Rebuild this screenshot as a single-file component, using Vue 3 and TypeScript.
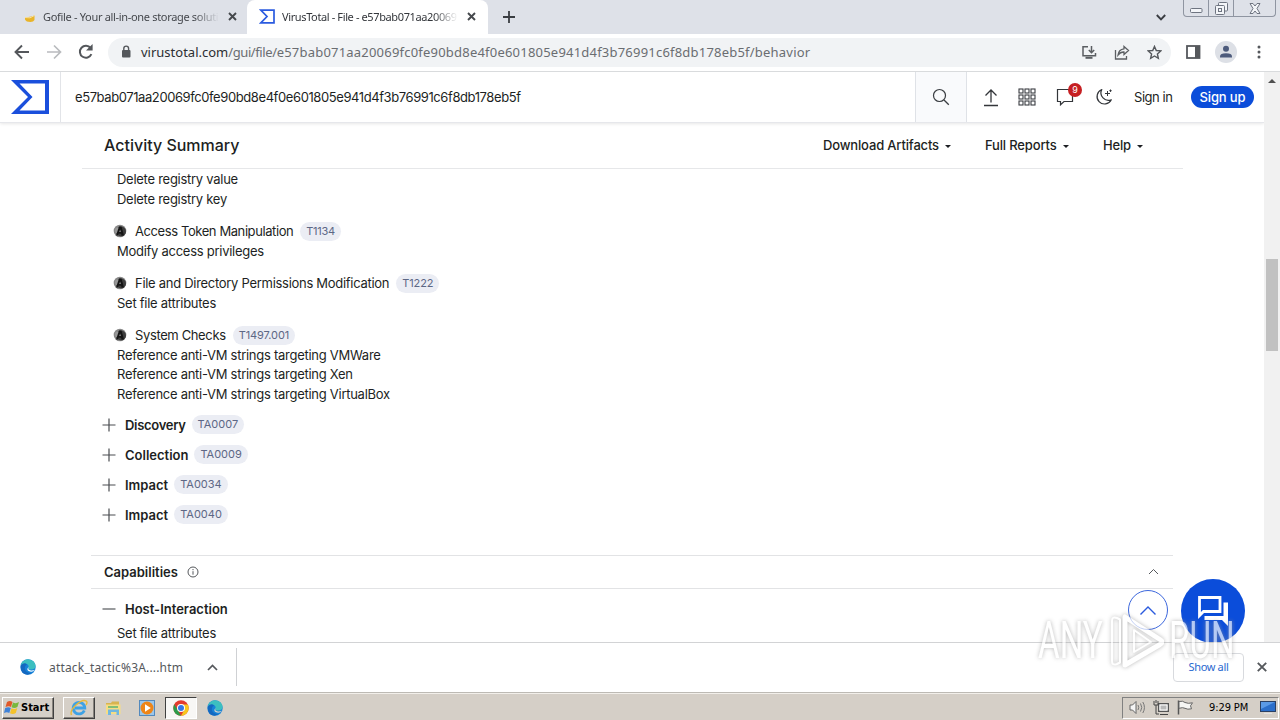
<script setup lang="ts">
interface Technique {
  name: string
  id: string
  kind: string
  items: string[]
}

interface Tactic {
  name: string
  id: string
}

const hash = 'e57bab071aa20069fc0fe90bd8e4f0e601805e941d4f3b76991c6f8db178eb5f'
const leading: string[] = ['Delete registry value', 'Delete registry key']

const techniques: Technique[] = [
  { name: 'Access Token Manipulation', id: 'T1134', kind: 'token', items: ['Modify access privileges'] },
  { name: 'File and Directory Permissions Modification', id: 'T1222', kind: 'perms', items: ['Set file attributes'] },
  {
    name: 'System Checks',
    id: 'T1497.001',
    kind: 'checks',
    items: [
      'Reference anti-VM strings targeting VMWare',
      'Reference anti-VM strings targeting Xen',
      'Reference anti-VM strings targeting VirtualBox',
    ],
  },
]

const tactics: Tactic[] = [
  { name: 'Discovery', id: 'TA0007' },
  { name: 'Collection', id: 'TA0009' },
  { name: 'Impact', id: 'TA0034' },
  { name: 'Impact', id: 'TA0040' },
]

const gridCells = [0, 1, 2, 3, 4, 5, 6, 7, 8].map((i) => ({ x: 1 + (i % 3) * 6, y: 1 + Math.floor(i / 3) * 6 }))
</script>

<template>
  <div class="screen">
    <header class="tabstrip">
      <div class="tab tab-idle">
        <svg class="fav-gofile" width="12" height="9" viewBox="0 0 12 9"><path d="M1 3.500l5-.8 4.500-1.200v4.500q-1 2-4 2-4.500 0-5.500-2.500z" fill="#e9b429" /><path d="M1 3.500l5 .3 4.500-2.300" fill="none" stroke="#f6e0a0" /></svg>
        <span class="tab-title">Gofile - Your all-in-one storage soluti</span>
        <svg class="tab-x" width="9" height="9" viewBox="0 0 9 9"><path d="M1 1l7 7M8 1l-7 7" stroke="#45484c" stroke-width="1.9" /></svg>
      </div>
      <div class="tab tab-active">
        <svg class="fav-vt" width="16" height="15" viewBox="0 0 16 15"><path d="M1.800 1.200H15v12.600H1.800L8 7.500z" fill="none" stroke="#2b5be0" stroke-width="1.700" /></svg>
        <span class="tab-title tab-title-vt">VirusTotal - File - e57bab071aa20069</span>
        <svg class="tab-x" width="9" height="9" viewBox="0 0 9 9"><path d="M1 1l7 7M8 1l-7 7" stroke="#45484c" stroke-width="1.9" /></svg>
      </div>
      <svg class="newtab" width="12" height="12" viewBox="0 0 12 12"><path d="M6 0v12M0 6h12" stroke="#3a3d42" stroke-width="1.800" /></svg>
      <svg class="tabsearch" width="10" height="7" viewBox="0 0 10 7"><path d="M.8 1l4.200 4.300L9.200 1" fill="none" stroke="#3a3d42" stroke-width="1.900" /></svg>
      <div class="winctl">
        <span class="wc wc-a"><svg width="13" height="5" viewBox="0 0 13 5"><rect x=".5" y=".5" width="11.500" height="4" rx="1" fill="#f3f5f8" stroke="#6e7480" /></svg></span>
        <span class="wc wc-b"><svg width="13" height="13" viewBox="0 0 13 13"><g fill="#f3f5f8" stroke="#6e7480"><rect x="3.500" y=".5" width="9" height="8.500" rx="1" /><rect x=".5" y="3.500" width="9" height="9" rx="1" /><rect x="3.500" y="6.500" width="3" height="3" /></g></svg></span>
        <span class="wc wc-c"><svg width="12" height="11" viewBox="0 0 12 11"><path d="M1 .5h3l2 2.500 2-2.500h3L8 5.500l3 5H8l-2-2.500-2 2.500H1l3-5z" fill="#f3f5f8" stroke="#6e7480" /></svg></span>
      </div>
    </header>

    <div class="toolbar">
      <svg class="nav" width="16" height="16" viewBox="0 0 16 16"><path d="M15 8H2M8 1.500L1.500 8 8 14.500" fill="none" stroke="#54575b" stroke-width="1.900" /></svg>
      <svg class="nav" width="16" height="16" viewBox="0 0 16 16"><path d="M1 8h13M8 1.500L14.500 8 8 14.500" fill="none" stroke="#b9bbbe" stroke-width="1.700" /></svg>
      <svg class="nav" width="16" height="16" viewBox="0 0 16 16"><path d="M13.400 10.200A6 6 0 1 1 12.600 4" fill="none" stroke="#54575b" stroke-width="2" /><path d="M14.600 0v6.600H8z" fill="#54575b" /></svg>
      <div class="omnibox">
        <svg class="lock" width="10" height="13" viewBox="0 0 10 13"><rect x="1" y="5" width="8.500" height="7.500" rx="1" fill="#55585c" /><path d="M2.800 5.500V3.500a2.400 2.400 0 0 1 4.800 0v2" fill="none" stroke="#55585c" stroke-width="1.400" /></svg>
        <span class="url"><b>virustotal.com</b><span class="urlpath">/gui/file/</span><span class="urlhash">{{ hash }}/behavior</span></span>
        <svg class="omni-i install" width="16" height="15" viewBox="0 0 16 15"><g fill="none" stroke="#5b5e62" stroke-width="1.500"><path d="M7 1.800H2v9h12.500V8M10.500 1v6.500M7.800 5l2.700 2.700L13.200 5" /><path d="M4.500 12.800h7" stroke-width="2" /></g></svg>
        <svg class="omni-i share" width="16" height="15" viewBox="0 0 16 15"><g fill="none" stroke="#5b5e62" stroke-width="1.300"><path d="M1.500 5v9h11v-3" /><path d="M10 1.500l4.500 4-4.500 4V7q-3.500-.2-6 3 .6-5.500 6-6.200z" /></g></svg>
        <svg class="omni-i star" width="15" height="15" viewBox="0 0 16 16"><path d="M8 1.500l1.900 4.400 4.800.4-3.600 3.200 1 4.700L8 11.700l-4.100 2.500 1-4.700L1.300 6.300l4.800-.4z" fill="none" stroke="#55585c" stroke-width="1.500" /></svg>
      </div>
      <svg class="panel" width="15" height="14" viewBox="0 0 15 14"><rect x="1" y="1" width="12.500" height="12" fill="#fff" stroke="#55585c" stroke-width="1.800" /><path d="M9 1h5v12H9z" fill="#55585c" /></svg>
      <svg class="avatar" width="22" height="22" viewBox="0 0 22 22"><circle cx="11" cy="11" r="11" fill="#dde0e6" /><circle cx="11" cy="7.800" r="3" fill="#4d5b7c" /><path d="M5 16.500v-1q0-3.200 6-3.200t6 3.200v1z" fill="#4d5b7c" /></svg>
      <svg class="dots" width="4" height="14" viewBox="0 0 4 14"><g fill="#55585c"><circle cx="2" cy="2" r="1.500" /><circle cx="2" cy="7" r="1.500" /><circle cx="2" cy="12" r="1.500" /></g></svg>
    </div>

    <div class="viewport">
      <main class="page">
        <div class="vt-bar">
          <div class="vt-logo"><svg width="38" height="34" viewBox="0 0 38 34"><path fill-rule="evenodd" d="M0 0h38v34H0l17-17zM8.500 3.600L21.500 17 8.500 30.400H34V3.600z" fill="#1a4fdc" /></svg></div>
          <div class="vt-query">{{ hash }}</div>
          <div class="vt-search"><svg width="18" height="18" viewBox="0 0 18 18"><circle cx="7.500" cy="7.500" r="6" fill="none" stroke="#3a3d42" stroke-width="1.200" /><path d="M12 12l4.800 4.800" stroke="#3a3d42" stroke-width="1.300" /></svg></div>
          <svg class="up" width="16" height="19" viewBox="0 0 16 19"><path d="M1 17.500h14M8 14.500V2M2.500 7.500L8 2l5.500 5.500" fill="none" stroke="#33363a" stroke-width="1.300" /></svg>
          <svg class="grid" width="18" height="18" viewBox="0 0 18 18"><rect v-for="(c, i) in gridCells" :key="i" :x="c.x" :y="c.y" width="4" height="4" fill="none" stroke="#3a3d42" stroke-width="1.100" /></svg>
          <div class="bell">
            <svg width="18" height="18" viewBox="0 0 18 18"><path d="M1.500 1.500h15v12H8L4.500 16.800v-3.300h-3z" fill="none" stroke="#33363a" stroke-width="1.200" /></svg>
            <span class="badge">9</span>
          </div>
          <svg class="moon" width="18" height="18" viewBox="0 0 18 18"><path d="M6.800 1.500a7.500 7.500 0 1 0 9.500 10.300 7.500 7.500 0 0 1-9.500-10.300z" fill="none" stroke="#33363a" stroke-width="1.200" stroke-linejoin="round" /><path d="M12.500 3v5M10 5.500h5M15.500 1.500v2.400M14.300 2.700h2.400" stroke="#33363a" stroke-width="1" /></svg>
          <span class="signin">Sign in</span>
          <span class="signup">Sign up</span>
        </div>

        <div class="summary">
          <h1>Activity Summary</h1>
          <span class="menu m1">Download Artifacts</span><i class="caret"></i>
          <span class="menu m2">Full Reports</span><i class="caret"></i>
          <span class="menu m3">Help</span><i class="caret"></i>
        </div>

        <section class="mitre">
          <p v-for="l in leading" :key="l" class="line">{{ l }}</p>
          <div v-for="t in techniques" :key="t.id" class="tech" :class="t.kind">
            <div class="tech-head">
              <svg width="14" height="14" viewBox="0 0 14 14"><circle cx="7" cy="7" r="6.300" fill="#888" /><circle cx="8" cy="7.500" r="5" fill="#3d3d3d" /><circle cx="5" cy="6.500" r="3" fill="#999" /><path d="M6 2.500h2.500l2.500 9H8.500l-.4-1.800H5.600L5 11.500H3z" fill="#151515" /><path d="M6.400 8l.7-2.500.6 2.500z" fill="#bbb" /></svg>
              <span class="tech-name">{{ t.name }}</span>
              <span class="pill">{{ t.id }}</span>
            </div>
            <p v-for="s in t.items" :key="s" class="line">{{ s }}</p>
          </div>
          <div class="tactics">
            <div v-for="t in tactics" :key="t.id" class="tactic">
              <svg width="14" height="14" viewBox="0 0 14 14"><path d="M7 .5v13M.5 7h13" stroke="#4a4d51" stroke-width="1.200" /></svg>
              <b :class="t.name.toLowerCase()">{{ t.name }}</b>
              <span class="pill pill-ta">{{ t.id }}</span>
            </div>
          </div>
        </section>

        <section class="caps">
          <div class="caps-head">
            <b>Capabilities</b>
            <svg width="12" height="12" viewBox="0 0 12 12"><circle cx="6" cy="6" r="5" fill="none" stroke="#55585c" /><path d="M6 5.200v3.500M6 3v1.200" stroke="#55585c" /></svg>
            <svg class="caps-up" width="11" height="7" viewBox="0 0 11 7"><path d="M1 6l4.500-4.500L10 6" fill="none" stroke="#55585c" /></svg>
          </div>
          <div class="tactic host">
            <svg width="14" height="14" viewBox="0 0 14 14"><path d="M.5 7h13" stroke="#55585c" stroke-width="1.200" /></svg>
            <b>Host-Interaction</b>
          </div>
          <p class="line">Set file attributes</p>
        </section>
        <div class="totop"><svg width="18" height="11" viewBox="0 0 18 11"><path d="M1.500 9.500L9 2l7.500 7.500" fill="none" stroke="#2a5ade" stroke-width="1.400" /></svg></div>
        <div class="chat"><svg width="30" height="30" viewBox="0 0 30 30"><path d="M1.500 1.500h20.500v14H5.500l-4 4z" fill="none" stroke="#fff" stroke-width="2.800" /><path d="M25.500 6.500H30V30l-6-6H6.500v-4H25.500z" fill="#fff" /></svg></div>
      </main>
      <div class="scrollbar">
        <i class="sb-arrow"></i>
        <i class="sb-thumb"></i>
      </div>
    </div>

    <div class="downloads">
      <svg class="dl-edge" width="16" height="16" viewBox="0 0 16 16"><circle cx="8" cy="8" r="7.700" fill="#1682d8" /><path d="M1 5Q4 0 9 .4q6 .8 6.500 6 .2 4-4.500 4-3 0-2.500-2 .5-3-2.500-3.600Q3 4.500 1 7z" fill="#3cbfc0" /><path d="M1 6q3-3 6-.8-3 2-2 5.200 1.500 4 7 3.400-4 3.200-8.500.8Q.2 12 1 6z" fill="#1468c0" /><path d="M8.500 8q-1 3 2.500 3.500 2 .2 4-.8-2.500 3-6 1.600-3-1.500-.5-4.300z" fill="#fff" /></svg>
      <span class="dl-name">attack_tactic%3A....htm</span>
      <svg class="dl-caret" width="11" height="7" viewBox="0 0 11 7"><path d="M1 6l4.500-4.500L10 6" fill="none" stroke="#55585c" stroke-width="1.700" /></svg>
      <i class="dl-sep"></i>
      <span class="showall">Show all</span>
      <svg class="dl-x" width="10" height="10" viewBox="0 0 10 10"><path d="M.8.8l8.400 8.400M9.200.8L.8 9.200" stroke="#55585c" stroke-width="1.900" /></svg>
    </div>

    <footer class="taskbar">
      <div class="start">
        <svg width="16" height="15" viewBox="0 0 16 15"><path d="M3 2q3-2 5.500 0L7 7Q5 5.500 1.500 7z" fill="#e0592a" /><path d="M9 2.500q3 1.500 6-.5l-1.600 5q-3 2-5.800.3z" fill="#79b83e" /><path d="M1.200 8Q4.500 6.500 6.800 8l-1.500 5Q3 11.500 0 13z" fill="#3f82d8" /><path d="M7.500 8.300q3 1.700 5.800-.2l-1.500 5q-3 1.900-5.800.2z" fill="#f4c22b" /></svg>
        <span>Start</span>
      </div>
      <div class="tb tb-up">
        <svg width="18" height="18" viewBox="0 0 18 18"><path d="M14.300 11.500A5.800 5.800 0 1 1 14.800 9H5" fill="none" stroke="#3ea2e5" stroke-width="2.800" /><path d="M1.500 16Q-.5 12 6 6t10-4q2 1 0 4" fill="none" stroke="#e7b93c" stroke-width="1.400" /></svg>
      </div>
      <div class="tb tb-flat">
        <svg width="17" height="16" viewBox="0 0 17 16"><path d="M1 3h5l1-1.500h7V5H1z" fill="#d8b450" /><path d="M1 4.500h14.500V14H1z" fill="#f6dd84" /><path d="M3 6h10v2H3z" fill="#82be77" /><path d="M3 9.500h11V15h-2.500v-3H6v3H3z" fill="#71b7df" /></svg>
      </div>
      <div class="tb tb-flat">
        <svg width="16" height="16" viewBox="0 0 16 16"><rect x=".5" y=".5" width="15" height="15" fill="#9cc7eb" stroke="#5389bd" /><circle cx="8" cy="8" r="6.500" fill="#ee8518" /><path d="M6 4.300L11.800 8 6 11.700z" fill="#fff" /></svg>
      </div>
      <div class="tb tb-on">
        <svg width="16" height="16" viewBox="0 0 16 16"><circle cx="8" cy="8" r="7.700" fill="#e33b2e" /><path d="M1.300 4.200L5 10.500l3 5.200A7.700 7.700 0 0 1 1.300 4.200z" fill="#2c9c4a" /><path d="M8 4.500h6.900A7.700 7.700 0 0 1 8 15.700L11.300 10z" fill="#f7c71e" /><circle cx="8" cy="8" r="4" fill="#fff" /><circle cx="8" cy="8" r="3" fill="#3477e5" /></svg>
      </div>
      <div class="tb tb-flat">
        <svg width="16" height="16" viewBox="0 0 16 16"><circle cx="8" cy="8" r="7.700" fill="#1682d8" /><path d="M1 5Q4 0 9 .4q6 .8 6.500 6 .2 4-4.500 4-3 0-2.500-2 .5-3-2.500-3.600Q3 4.500 1 7z" fill="#3cbfc0" /><path d="M1 6q3-3 6-.8-3 2-2 5.200 1.500 4 7 3.400-4 3.200-8.500.8Q.2 12 1 6z" fill="#1468c0" /><path d="M8.500 8q-1 3 2.500 3.500 2 .2 4-.8-2.500 3-6 1.600-3-1.500-.5-4.300z" fill="#d6d2ca" /></svg>
      </div>
      <div class="tray">
        <svg width="17" height="15" viewBox="0 0 17 15"><path d="M1 5h2.500L7 1.500v12L3.500 10H1z" fill="#f5f5f5" stroke="#666" /><path d="M9 5q1.500 2.500 0 5M11.500 3.500q2.500 4 0 8M13.800 2q3.300 5.500 0 11" fill="none" stroke="#777" /></svg>
        <svg class="net" width="16" height="16" viewBox="0 0 16 16"><rect x="5.500" y="3.500" width="10" height="8" fill="#aaa" stroke="#555" /><path d="M7 5h7v5H7z" fill="#b9b9b9" stroke="#fff" /><path d="M7 14.500h8M1 1v4h4V1M3 5v9h3M3 0v3" fill="none" stroke="#444" /></svg>
        <svg class="flag" width="17" height="15" viewBox="0 0 17 15"><path d="M1.500.5v14" stroke="#555" stroke-width="1.500" /><path d="M2 1.500q4-1 6 1 3 1.500 7.500.3l-2 3 1 3q-4 1-6.500-.5-2-1.300-6 0z" fill="#f5f5f3" stroke="#666" /></svg>
        <span class="clock">9:29 PM</span>
        <svg class="desk" width="16" height="13" viewBox="0 0 16 13"><rect x=".5" y=".5" width="15" height="10" fill="#2c6fca" stroke="#2b4063" /><path d="M1 1h14L1 8z" fill="#5b9ae6" /><path d="M4 12.300h8" stroke="#e6e6e6" /></svg>
      </div>
    </footer>

    <div class="watermark">
      <span class="wm-text wm-any">ANY</span>
      <svg width="56" height="64" viewBox="0 0 56 64"><g fill="none" stroke="#fff" stroke-linejoin="round"><path d="M4 12v40q0 5 5 3l3-1.500V10.500L9 9q-5-2-5 3z" stroke-width="2" /><path d="M17 8v48l35-20.500q4-2.500 0-5L17 8z" stroke-width="5" /><path d="M26 21v22l17-10z" stroke-width="2" /></g></svg>
      <span class="wm-text wm-run">RUN</span>
    </div>
  </div>
</template>

<style>
html,
body {
  margin: 0;
  overflow: hidden;
  background: #fff;
}
</style>

<style scoped>
* {
  box-sizing: border-box;
}
svg {
  display: block;
  flex: none;
}
.screen {
  position: relative;
  width: 1280px;
  height: 720px;
  display: flex;
  flex-direction: column;
  overflow: hidden;
  background: #fff;
  color: #1d1f23;
  font-family: Inter, "Liberation Sans", sans-serif;
  font-size: 13px;
  white-space: nowrap;
}
p,
h1 {
  margin: 0;
}

/* browser chrome */
.tabstrip {
  display: flex;
  height: 34px;
  flex: none;
  background: #dee1e8;
  font-family: "Noto Sans", "Open Sans", sans-serif;
  font-size: 11px;
  color: #45484d;
}
.tab {
  display: flex;
  align-items: center;
  height: 34px;
  padding-bottom: 1px;
}
.tab-idle {
  width: 247px;
  padding-left: 24px;
}
.fav-gofile {
  margin-right: 7px;
  margin-top: 3px;
}
.tab-title {
  width: 176px;
  overflow: hidden;
  letter-spacing: -0.32px;
  mask-image: linear-gradient(90deg, #000 86%, transparent);
}
.tab-x {
  margin-left: 9px;
}
.tab-active {
  width: 241px;
  padding-left: 12px;
  background: #fff;
  border-radius: 8px 8px 0 0;
  color: #33363b;
}
.tab-title-vt {
  margin-left: 7px;
  letter-spacing: -0.38px;
}
.newtab {
  margin: 11px 0 0 15px;
}
.tabsearch {
  margin: 14px 0 0 641px;
}
.winctl {
  display: flex;
  width: 93px;
  height: 17px;
  margin-left: 17px;
  border: 1px solid #8f95a1;
  border-top: 0;
  border-radius: 0 0 4px 4px;
}
.wc {
  display: flex;
  align-items: center;
  justify-content: center;
  border-right: 1px solid #8f95a1;
}
.wc-a {
  width: 25px;
  padding-top: 4px;
}
.wc-b {
  width: 25px;
}
.wc-c {
  width: 41px;
  border-right: 0;
}
.toolbar {
  display: flex;
  align-items: center;
  height: 38px;
  flex: none;
  padding: 0 0 1px 14px;
  border-bottom: 1px solid #d9dbdd;
}
.nav {
  margin-right: 16px;
}
.omnibox {
  display: flex;
  align-items: center;
  width: 1063px;
  height: 29px;
  margin-left: -2px;
  padding-left: 13px;
  border-radius: 15px;
  background: #f1f3f5;
}
.lock {
  margin-top: -2px;
}
.url {
  width: 938px;
  margin-left: 10px;
  font-family: "Noto Sans", "Open Sans", sans-serif;
  font-size: 13px;
  color: #6a6d71;
}
.url b {
  font-weight: 400;
  color: #2c2e32;
}
.urlpath {
  letter-spacing: -0.4px;
}
.urlhash {
  letter-spacing: 0.21px;
}
.omni-i {
  margin-left: 17px;
}
.install {
  margin-left: 2px;
}
.panel {
  margin-left: 15px;
}
.avatar {
  margin-left: 14px;
}
.dots {
  margin-left: 20px;
}

/* page */
.viewport {
  display: flex;
  height: 570px;
  flex: none;
}
.page {
  position: relative;
  width: 1264px;
  overflow: hidden;
}
.vt-bar {
  display: flex;
  align-items: center;
  height: 51px;
  border-bottom: 1px solid #e6e7eb;
  box-shadow: 0 1px 3px #00000018;
}
.vt-logo {
  display: flex;
  align-items: center;
  width: 61px;
  height: 50px;
  padding-left: 11px;
  border-right: 1px solid #e2e4e8;
}
.vt-query {
  width: 854px;
  padding-left: 14px;
  letter-spacing: -0.41px;
}
.vt-search {
  display: flex;
  align-items: center;
  justify-content: center;
  width: 52px;
  height: 50px;
  padding-right: 1px;
  border: solid #dfe2e7;
  border-width: 0 1px;
  background: #f9fafc;
}
.up {
  margin-left: 16px;
}
.grid {
  margin-left: 19px;
}
.bell {
  position: relative;
  margin-left: 20px;
}
.badge {
  position: absolute;
  left: 12px;
  top: -5px;
  width: 14px;
  height: 14px;
  border-radius: 7px;
  background: #c61f22;
  color: #fff;
  font-size: 9px;
  line-height: 14px;
  text-align: center;
}
.moon {
  margin-left: 21px;
}
.signin {
  width: 39px;
  margin-left: 21px;
  letter-spacing: -0.45px;
}
.signup {
  width: 63px;
  height: 22px;
  margin-left: 18px;
  border-radius: 11px;
  background: #0b4dda;
  color: #fff;
  font-weight: 500;
  letter-spacing: -0.15px;
  line-height: 22px;
  text-align: center;
}
.summary {
  display: flex;
  align-items: center;
  width: 1101px;
  height: 46px;
  margin-left: 82px;
  padding: 0 0 1px 22px;
  border-bottom: 1px solid #e6e7e9;
}
h1 {
  width: 719px;
  font-size: 16px;
  font-weight: 500;
}
.menu {
  font-weight: 500;
  letter-spacing: -0.16px;
}
.caret {
  margin: 2px 0 0 6px;
  border: solid transparent;
  border-width: 3px 3px 0;
  border-top-color: #1d1f23;
}
.m1 {
  width: 116px;
}
.m2 {
  width: 72px;
  margin-left: 34px;
}
.m3 {
  width: 28px;
  margin-left: 34px;
}
.mitre {
  height: 386px;
  padding-top: 1px;
}
.line {
  height: 19.5px;
  padding-left: 117px;
  line-height: 19.5px;
  letter-spacing: -0.27px;
}
.tech {
  margin-top: 13px;
}
.tech-head {
  display: flex;
  align-items: center;
  height: 19.5px;
  padding: 0 0 1px 113px;
}
.tech-name {
  margin-left: 8px;
}
.token .tech-name {
  letter-spacing: -0.41px;
}
.perms .tech-name {
  letter-spacing: -0.29px;
}
.checks .tech-name {
  letter-spacing: -0.37px;
}
.pill {
  height: 19px;
  margin-left: 7px;
  padding: 0 6px;
  border-radius: 10px;
  background: #ebedf4;
  color: #5d6785;
  font-size: 11px;
  line-height: 19px;
}
.token .pill {
  letter-spacing: -0.3px;
}
.perms .pill,
.checks .pill {
  letter-spacing: -0.1px;
}
.pill-ta {
  margin-left: 6px;
}
.tactics {
  margin-top: 5.5px;
}
.tactic {
  display: flex;
  align-items: center;
  height: 30px;
  padding-left: 102px;
}
.tactic b {
  margin-left: 9px;
}
.tactic .discovery {
  letter-spacing: -0.3px;
}
b {
  font-weight: 600;
}
.caps-head {
  display: flex;
  align-items: center;
  width: 1082px;
  height: 34px;
  margin-left: 91px;
  padding: 0 0 1px 13px;
  border: solid #e2e3e5;
  border-width: 1px 0;
}
.caps-head b {
  margin-right: 9px;
}
.caps-up {
  margin-left: auto;
  margin-right: 14px;
}
.host {
  margin-top: 5px;
}
.totop {
  position: absolute;
  left: 1128px;
  top: 518px;
  display: flex;
  align-items: center;
  justify-content: center;
  width: 40px;
  height: 40px;
  border: 1px solid #3c67dd;
  border-radius: 20px;
  background: #fff;
}
.chat {
  position: absolute;
  left: 1181px;
  top: 507px;
  display: flex;
  align-items: center;
  justify-content: center;
  width: 64px;
  height: 64px;
  border-radius: 32px;
  background: #0b4dda;
}
.scrollbar {
  display: flex;
  flex-direction: column;
  align-items: center;
  width: 16px;
  background: #f1f1f1;
}
.sb-arrow {
  margin-top: 7px;
  border: solid transparent;
  border-width: 0 4px 4px;
  border-bottom-color: #505050;
}
.sb-thumb {
  width: 12px;
  height: 92px;
  margin-top: 176px;
  background: #c1c1c1;
}

/* download shelf */
.downloads {
  display: flex;
  align-items: center;
  height: 50px;
  flex: none;
  padding: 0 0 1px 20px;
  border-top: 1px solid #d2d3d5;
  background: #fff;
  font-family: "Noto Sans", "Open Sans", sans-serif;
}
.dl-name {
  width: 135px;
  margin-left: 13px;
  font-size: 12px;
  letter-spacing: 0.18px;
  color: #55585c;
}
.dl-caret {
  margin-left: 23px;
}
.dl-sep {
  width: 1px;
  height: 38px;
  margin-left: 18px;
  background: #cfd1d4;
}
.showall {
  width: 71px;
  height: 29px;
  margin-left: 936px;
  border: 1px solid #d8dade;
  border-radius: 4px;
  color: #2a69cf;
  font-size: 11px;
  letter-spacing: -0.35px;
  line-height: 26px;
  text-align: center;
}
.dl-x {
  margin-left: 13px;
}

/* desktop taskbar */
.taskbar {
  display: flex;
  align-items: center;
  height: 28px;
  flex: none;
  padding: 2px 0 0 2px;
  border-top: 1px solid #bdbab4;
  background: #d5cfc7;
  box-shadow: inset 0 1px #f2efea;
  font-family: "DejaVu Sans Condensed", "DejaVu Sans", sans-serif;
  color: #000;
}
.start,
.tb-up {
  border: 1px solid;
  border-color: #fff #404040 #404040 #fff;
  box-shadow: inset -1px -1px #88847e;
}
.start {
  display: flex;
  align-items: center;
  gap: 1px;
  width: 52px;
  height: 22px;
  padding-left: 1px;
  font-size: 11px;
  font-weight: 700;
}
.tb {
  display: flex;
  align-items: center;
  justify-content: center;
  width: 32px;
  height: 22px;
}
.tb-up {
  margin-left: 9px;
}
.tb-flat {
  margin-left: 2px;
}
.tb-on {
  margin-left: 2px;
  border: 1px solid;
  border-color: #404040 #fff #fff #404040;
  background: #f8f7f5;
}
.tray {
  display: flex;
  align-items: center;
  width: 157px;
  height: 22px;
  margin-left: auto;
  margin-right: 1px;
  padding-left: 6px;
  border: 1px solid;
  border-color: #808080 #fff #fff #808080;
}
.net {
  margin-left: 7px;
}
.flag {
  margin-left: 8px;
}
.clock {
  width: 40px;
  margin-left: 15px;
  font-size: 11px;
  letter-spacing: -0.1px;
}
.desk {
  margin-left: 11px;
}

/* recorder overlay */
.watermark {
  position: absolute;
  left: 1038px;
  top: 609px;
  display: flex;
  align-items: center;
  width: 200px;
  height: 64px;
  opacity: 0.7;
  filter: drop-shadow(0 0 2px #999);
}
.wm-text {
  color: #fff;
  font-family: Roboto, sans-serif;
  font-size: 51px;
  line-height: 64px;
  transform: scaleX(0.65);
  transform-origin: 0 50%;
}
.wm-any {
  width: 70px;
}
.wm-run {
  margin-left: 5px;
}
</style>
